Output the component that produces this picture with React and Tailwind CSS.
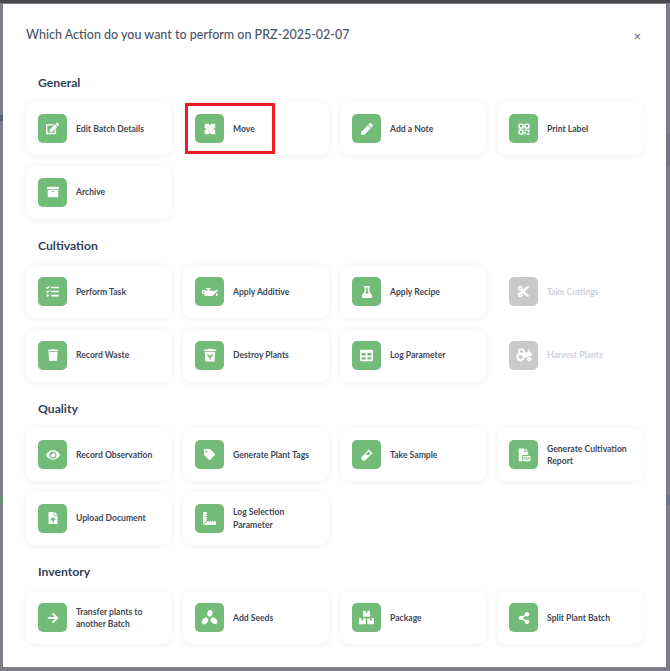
import {
  FaEdit, FaPen, FaArchive, FaTasks, FaOilCan, FaFlask, FaCut, FaTractor,
  FaTrash, FaTable, FaEye, FaTag, FaVial, FaFileUpload, FaRulerCombined, FaArrowRight, FaBoxes, FaShareAlt,
} from 'react-icons/fa'

const MoveIcon = ({ size }) => (
  <svg width={size} height={size} viewBox="0 0 16 16" fill="currentColor" fillRule="evenodd">
    <path d="M1 1H6.500L8 3.500 9.500 1H15V6.500L12.500 8 15 9.500V15H9.500L8 12.500 6.500 15H1V9.500L3.500 8 1 6.500zM6.200 6.200L5 5 5 6.500zM9.800 6.200L11 5 9.500 5zM6.200 9.800L5 11 6.500 11zM9.800 9.800L11 11 11 9.500z" />
  </svg>
)

const QrIcon = ({ size }) => (
  <svg width={size} height={size} viewBox="0 0 16 16" fill="none" stroke="currentColor" strokeWidth="2">
    <rect x="1.500" y="1.500" width="5.200" height="5.200" rx="1.200" />
    <rect x="9.300" y="1.500" width="5.200" height="5.200" rx="1.200" />
    <rect x="1.500" y="9.300" width="5.200" height="5.200" rx="1.200" />
    <path d="M9 9.800h3.500M14.500 9v3.500M9.500 11.500V15M11.500 14.500H15" />
  </svg>
)

const BinPlantIcon = ({ size }) => (
  <svg width={size} height={size} viewBox="0 0 16 16" fill="currentColor">
    <path d="M5.500 0.800h5l.5 1H15v1.700H1V1.800H5z" />
    <path fillRule="evenodd" d="M2 4.300h12l-.8 11H2.800zM7.300 13.500V10.500C5.800 10.500 4.700 9.400 4.600 7.500 6.200 7.500 7.400 8.200 7.900 9.300 8.300 8 9.400 7 11.400 7 11.400 9 10.300 10.400 8.700 10.500V13.500z" />
  </svg>
)

const PdfIcon = ({ size }) => (
  <svg width={size} height={size} viewBox="0 0 16 16" fill="currentColor">
    <path d="M2 0.500H8.500V4.800H12.800V8H6V15H2z" />
    <path d="M9.500 0.500L12.800 3.800H9.500z" />
    <rect x="6.800" y="9" width="8.700" height="6" rx="0.600" />
    <text x="11.150" y="13.500" textAnchor="middle" fontSize="4" fontWeight="700" fill="#72bb78">PDF</text>
  </svg>
)

const SeedsIcon = ({ size }) => (
  <svg width={size} height={size} viewBox="0 0 20 20" fill="currentColor">
    <ellipse cx="10.500" cy="5" rx="3" ry="4" transform="rotate(15 10.500 5)" />
    <ellipse cx="4.700" cy="14" rx="3.200" ry="4.400" transform="rotate(40 4.700 14)" />
    <ellipse cx="15.300" cy="13.800" rx="3.200" ry="4.500" transform="rotate(-50 15.300 13.800)" />
  </svg>
)

const sections = [
  {
    title: 'General',
    items: [
      { label: 'Edit Batch Details', Icon: FaEdit, size: 13 },
      { label: 'Move', Icon: MoveIcon, size: 12 },
      { label: 'Add a Note', Icon: FaPen, size: 12 },
      { label: 'Print Label', Icon: QrIcon, size: 12 },
      { label: 'Archive', Icon: FaArchive, size: 12 },
    ],
  },
  {
    title: 'Cultivation',
    items: [
      { label: 'Perform Task', Icon: FaTasks, size: 13 },
      { label: 'Apply Additive', Icon: FaOilCan, size: 16 },
      { label: 'Apply Recipe', Icon: FaFlask, size: 12 },
      { label: 'Take Cuttings', Icon: FaCut, size: 13, disabled: true },
      { label: 'Record Waste', Icon: FaTrash, size: 12 },
      { label: 'Destroy Plants', Icon: BinPlantIcon, size: 14 },
      { label: 'Log Parameter', Icon: FaTable, size: 13 },
      { label: 'Harvest Plants', Icon: FaTractor, size: 16, disabled: true },
    ],
  },
  {
    title: 'Quality',
    items: [
      { label: 'Record Observation', Icon: FaEye, size: 14 },
      { label: 'Generate Plant Tags', Icon: FaTag, size: 11 },
      { label: 'Take Sample', Icon: FaVial, size: 12 },
      { label: 'Generate Cultivation Report', Icon: PdfIcon, size: 14 },
      { label: 'Upload Document', Icon: FaFileUpload, size: 12 },
      { label: 'Log Selection Parameter', Icon: FaRulerCombined, size: 13 },
    ],
  },
  {
    title: 'Inventory',
    items: [
      { label: 'Transfer plants to another Batch', Icon: FaArrowRight, size: 12 },
      { label: 'Add Seeds', Icon: SeedsIcon, size: 17 },
      { label: 'Package', Icon: FaBoxes, size: 15 },
      { label: 'Split Plant Batch', Icon: FaShareAlt, size: 12 },
    ],
  },
]

const ActionCard = ({ label, Icon, size, disabled }) => (
  <div className={`relative flex h-[53px] items-center gap-[9px] rounded-[9px] px-3 ${disabled ? '' : 'bg-white shadow-[0_1px_7px_rgba(30,40,60,0.06)]'}`}>
    <div className={`flex h-[29px] w-[29px] shrink-0 items-center justify-center rounded-[5px] text-white ${disabled ? 'bg-[#c9c9c9]' : 'bg-[#72bb78]'}`}>
      <Icon size={size} />
    </div>
    <span className={`pt-px text-[8.600px] font-bold leading-[12.300px] ${disabled ? 'text-[#ced1dc]' : 'text-[#414755]'}`}>
      {label}
    </span>
    {label === 'Move' && <div className="absolute left-[2px] top-[1px] h-[51px] w-[90px] border-[3px] border-[#ee1c25]" />}
  </div>
)

const App = () => {
  return (
    <div className="relative h-[671px] w-[670px] overflow-hidden bg-[#7d7d89] font-['Lato',sans-serif]">
      {/* page behind the overlay, only its edges show */}
      <div className="h-[3px] bg-[#48484c]" />
      <div className="absolute left-0 top-[115px] h-[6px] w-[3px] bg-[#56606f]" />
      <div className="absolute left-0 top-[495px] h-[10px] w-[3px] bg-[#6f8a78]" />
      <div className="absolute right-0 top-[133px] h-[32px] w-[4px] bg-[#757588]" />
      <div className="absolute right-0 top-[495px] h-[10px] w-[4px] bg-[#70708f]" />

      <div className="relative ml-[3px] mt-[0.500px] h-[663px] w-[663px] bg-white px-[23px] pt-[23px]">
        <div className="flex h-[17px] items-center justify-between">
          <h2 className="text-[12.500px] font-medium text-[#4b5568]">
            Which Action do you want to perform on PRZ-2025-02-07
          </h2>
          <span className="mr-[2px] mt-[2px] text-[13px] leading-none text-[#5b6373]">×</span>
        </div>
        <div className="mt-[28.500px] flex flex-col gap-[16.500px]">
          {sections.map((section) => (
            <section key={section.title}>
              <h3 className="mb-[10px] h-[20px] pl-3 text-[12.200px] font-bold leading-[21px] text-[#333f58]">
                {section.title}
              </h3>
              <div className="grid w-[617px] grid-cols-4 gap-x-[11px] gap-y-[10.500px]">
                {section.items.map((item) => (
                  <ActionCard key={item.label} {...item} />
                ))}
              </div>
            </section>
          ))}
        </div>
      </div>
    </div>
  )
}

export default App
